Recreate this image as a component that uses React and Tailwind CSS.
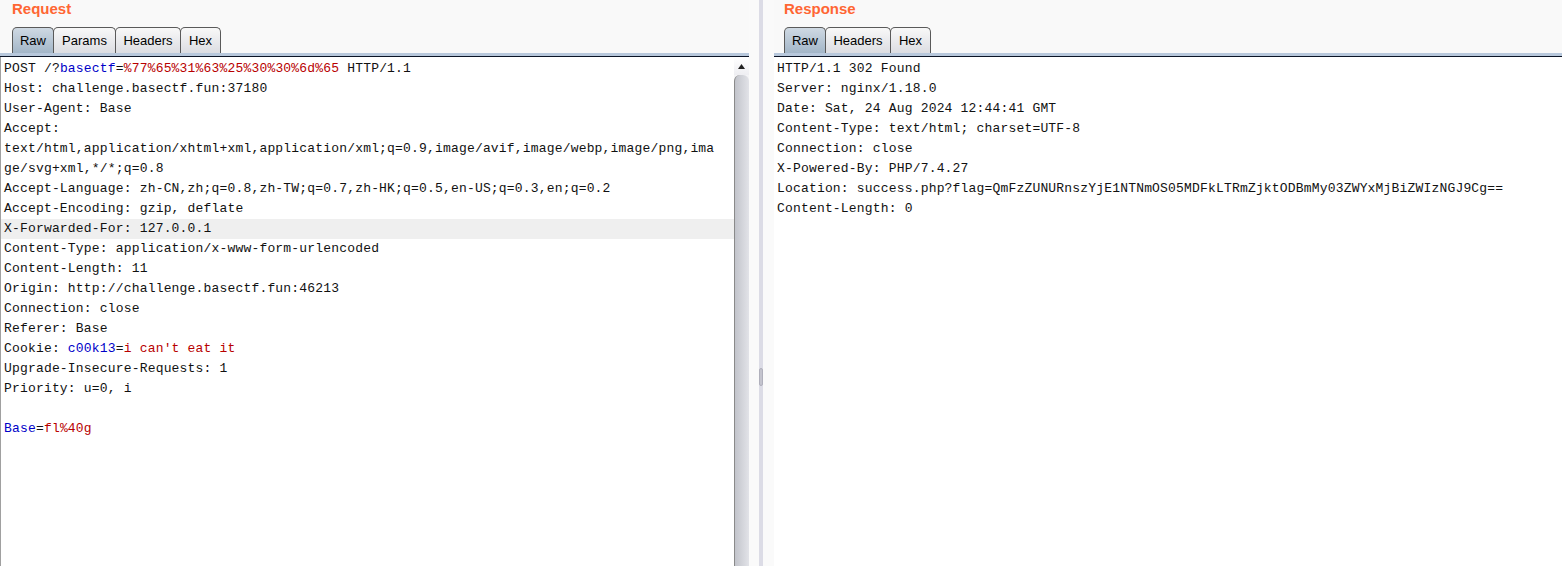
import React from "react";

const B = ({ children }) => <span className="text-[#0000c8]">{children}</span>;
const R = ({ children }) => <span className="text-[#b80000]">{children}</span>;

function Tabs({ items }) {
  return (
    <div className="flex items-end h-[26px]">
      {items.map((t, i) => (
        <div
          key={t.label}
          className={
            "h-[26px] flex items-center justify-center border border-b-0 border-[#5a5a5a] rounded-t-[5px] text-[13px] text-black " +
            (i > 0 ? "-ml-px " : "") +
            (t.active
              ? "bg-gradient-to-b from-[#cfd9e3] to-[#a3b6c8]"
              : "bg-gradient-to-b from-[#f8f8f8] to-[#dcdde2]")
          }
          style={{ width: t.w }}
        >
          {t.label}
        </div>
      ))}
    </div>
  );
}

function Header({ title, tabs, pl }) {
  return (
    <div className="bg-[#f9f9f9]">
      <div className={pl + " h-[53px]"}>
        <div className="h-[17px] leading-[17px] text-[15px] font-bold text-[#ff6633]">{title}</div>
        <div className="mt-[10px]">
          <Tabs items={tabs} />
        </div>
      </div>
      <div className="h-[3px] bg-[#b8c8dc]" />
      <div className="h-px bg-[#0b1426]" />
    </div>
  );
}

const reqLines = [
  <>POST /?<B>basectf</B>=<R>%77%65%31%63%25%30%30%6d%65</R> HTTP/1.1</>,
  <>Host: challenge.basectf.fun:37180</>,
  <>User-Agent: Base</>,
  <>Accept:</>,
  <>text/html,application/xhtml+xml,application/xml;q=0.9,image/avif,image/webp,image/png,ima</>,
  <>ge/svg+xml,*/*;q=0.8</>,
  <>Accept-Language: zh-CN,zh;q=0.8,zh-TW;q=0.7,zh-HK;q=0.5,en-US;q=0.3,en;q=0.2</>,
  <>Accept-Encoding: gzip, deflate</>,
  <>X-Forwarded-For: 127.0.0.1</>,
  <>Content-Type: application/x-www-form-urlencoded</>,
  <>Content-Length: 11</>,
  <>Origin: http://challenge.basectf.fun:46213</>,
  <>Connection: close</>,
  <>Referer: Base</>,
  <>Cookie: <B>c00k13</B>=<R>i can't eat it</R></>,
  <>Upgrade-Insecure-Requests: 1</>,
  <>Priority: u=0, i</>,
  <>{"\u00a0"}</>,
  <><B>Base</B>=<R>fl%40g</R></>,
];

const resLines = [
  "HTTP/1.1 302 Found",
  "Server: nginx/1.18.0",
  "Date: Sat, 24 Aug 2024 12:44:41 GMT",
  "Content-Type: text/html; charset=UTF-8",
  "Connection: close",
  "X-Powered-By: PHP/7.4.27",
  "Location: success.php?flag=QmFzZUNURnszYjE1NTNmOS05MDFkLTRmZjktODBmMy03ZWYxMjBiZWIzNGJ9Cg==",
  "Content-Length: 0",
];

const mono = { fontFamily: '"Liberation Mono", "Courier New", monospace' };

export default function App() {
  return (
    <div
      className="w-[1562px] h-[566px] flex bg-[#f9f9f9] overflow-hidden"
      style={{ fontFamily: '"Liberation Sans", Arial, sans-serif' }}
    >
      {/* Left panel */}
      <div className="w-[749px] flex flex-col">
        <Header
          title="Request"
          pl="pl-[12px]"
          tabs={[
            { label: "Raw", w: 42, active: true },
            { label: "Params", w: 63 },
            { label: "Headers", w: 66 },
            { label: "Hex", w: 41 },
          ]}
        />
        <div className="flex-1 flex min-h-0">
          <div
            className="flex-1 bg-white border-l border-[#a0a0a0] pt-[2px] text-[13px] leading-[20px] tracking-[0.18px] text-[#111] whitespace-pre"
            style={mono}
          >
            {reqLines.map((l, i) => (
              <div key={i} className={"pl-[3px] h-[20px] " + (i === 8 ? "bg-[#efefef]" : "")}>
                {l}
              </div>
            ))}
          </div>
          <div className="w-[15px] flex flex-col bg-[#f4f4f6]">
            <div className="h-[18px] flex items-center justify-center bg-gradient-to-b from-[#ffffff] to-[#eeeef2]">
              <svg width="7" height="5" viewBox="0 0 7 5">
                <polygon points="3.5,0 7,5 0,5" fill="#222" />
              </svg>
            </div>
            <div className="flex-1 rounded-t-[6px] border-l border-[#8a8a8a] bg-gradient-to-r from-[#c2c4cb] to-[#e2e3e8]" />
          </div>
        </div>
      </div>

      {/* Divider */}
      <div className="w-[25px] flex justify-center bg-[#fafafa]">
        <div className="ml-[-2px] w-[4px] bg-[#dcdce6] flex flex-col">
          <div className="h-[368px]" />
          <div className="h-[18px] rounded-[2px] bg-[#c4c4ce] border border-[#b0b0bc]" />
        </div>
      </div>

      {/* Right panel */}
      <div className="flex-1 flex flex-col">
        <Header
          title="Response"
          pl="pl-[10px]"
          tabs={[
            { label: "Raw", w: 42, active: true },
            { label: "Headers", w: 66 },
            { label: "Hex", w: 41 },
          ]}
        />
        <div
          className="flex-1 bg-white pt-[2px] pl-[3px] text-[13px] leading-[20px] tracking-[0.18px] text-[#111] whitespace-pre"
          style={mono}
        >
          {resLines.map((l, i) => (
            <div key={i} className="h-[20px]">
              {l}
            </div>
          ))}
        </div>
      </div>
    </div>
  );
}
